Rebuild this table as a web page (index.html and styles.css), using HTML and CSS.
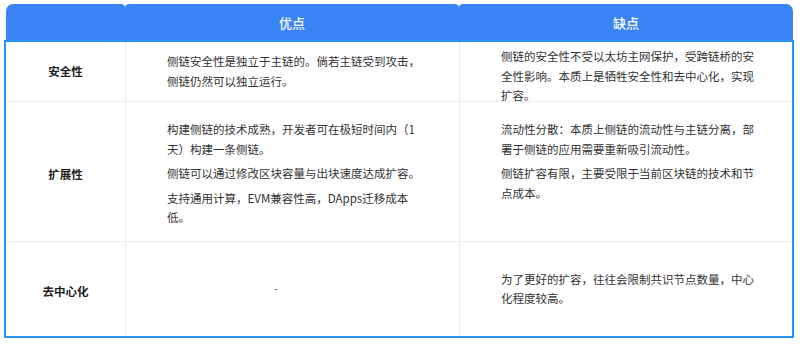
FILE: index.html
```html
<!DOCTYPE html>
<html lang="zh-CN">
<head>
<meta charset="utf-8">
<title>侧链优缺点</title>
<link rel="stylesheet" href="styles.css">
</head>
<body>
<div class="tbl">
  <div class="head">
    <div class="hc hc-first"></div>
    <div class="hc hc-mid">优点</div>
    <div class="hc hc-last">缺点</div>
  </div>
  <div class="grid">
    <div class="c lab">安全性</div>
    <div class="c txt mid-center">
      <p>侧链安全性是独立于主链的。倘若主链受到攻击，侧链仍然可以独立运行。</p>
    </div>
    <div class="c txt top-5">
      <p>侧链的安全性不受以太坊主网保护，受跨链桥的安全性影响。本质上是牺牲安全性和去中心化，实现扩容。</p>
    </div>

    <div class="c lab lab-low">扩展性</div>
    <div class="c txt top-18">
      <p>构建侧链的技术成熟，开发者可在极短时间内（1天）构建一条侧链。</p>
      <p>侧链可以通过修改区块容量与出块速度达成扩容。</p>
      <p>支持通用计算，EVM兼容性高，DApps迁移成本低。</p>
    </div>
    <div class="c txt top-18">
      <p>流动性分散：本质上侧链的流动性与主链分离，部署于侧链的应用需要重新吸引流动性。</p>
      <p>侧链扩容有限，主要受限于当前区块链的技术和节点成本。</p>
    </div>

    <div class="c lab lab-low last">去中心化</div>
    <div class="c txt mid-center dash last">
      <p>-</p>
    </div>
    <div class="c txt mid-center last">
      <p>为了更好的扩容，往往会限制共识节点数量，中心化程度较高。</p>
    </div>
  </div>
</div>
</body>
</html>
```

FILE: styles.css
```css
html, body {
  margin: 0;
  padding: 0;
  background: #ffffff;
}

body {
  font-family: "Noto Sans CJK SC", "Noto Sans", sans-serif;
  color: #333333;
}

.tbl {
  margin: 4px 0 0 4px;
  width: 790px;
}

.head {
  display: flex;
  height: 36px;
  margin: 0 1px 0 2px;
}

.hc {
  background: #3b84f6;
  color: #ffffff;
  border-radius: 4px 4px 0 0;
  display: flex;
  align-items: center;
  justify-content: center;
  font-size: 13px;
  font-weight: 500;
}

.hc-first {
  width: 119px;
  border-top-left-radius: 7px;
}

.hc-mid {
  width: 334px;
}

.hc-last {
  width: 334px;
  border-top-right-radius: 7px;
}

.grid {
  border: 2px solid #2a93f5;
  display: grid;
  grid-template-columns: 119px 334px 333px;
  grid-template-rows: 60px 140px 94px;
}

.c {
  box-sizing: border-box;
  border-bottom: 1px solid #ececec;
  display: flex;
  flex-direction: column;
  font-size: 11.5px;
  line-height: 19.5px;
}

.c.last {
  border-bottom: none;
}

.lab {
  align-items: center;
  justify-content: center;
  font-weight: 700;
  color: #222222;
}

.lab-low {
  padding-top: 6px;
}

.txt {
  border-left: 1px solid #ececec;
  padding: 0 36px 0 41px;
}

.txt p {
  margin: 0 0 5px 0;
}

.txt p:last-child {
  margin-bottom: 0;
}

.mid-center {
  justify-content: center;
}

.top-5 {
  padding-top: 5px;
}

.top-18 {
  padding-top: 18px;
}

.dash {
  padding-left: 148px;
  color: #666666;
}
```
